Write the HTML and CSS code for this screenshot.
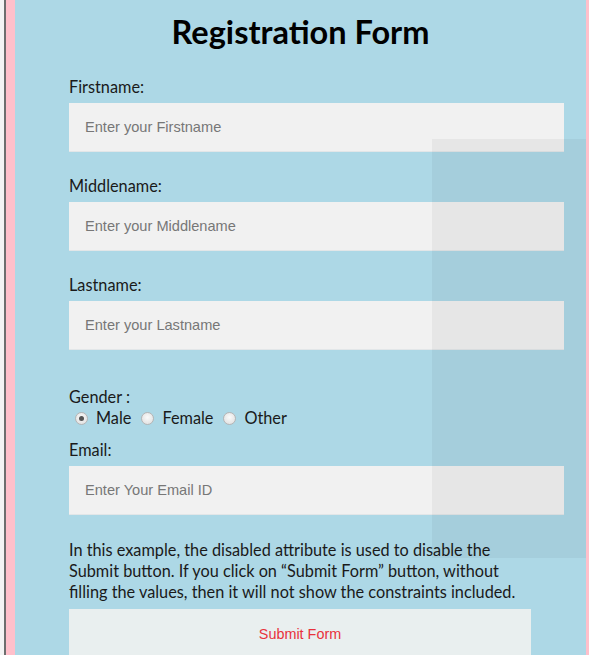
FILE: index.html
```html
<!DOCTYPE html>
<html>
<head>
<meta charset="utf-8">
<link rel="stylesheet" href="styles.css">
</head>
<body>
<div class="frame">
  <div class="edge"></div>
  <div class="page">
    <h1 class="title">Registration Form</h1>
    <form class="form">
      <label class="label">Firstname:</label>
      <input class="field" type="text" placeholder="Enter your Firstname">
      <label class="label">Middlename:</label>
      <input class="field" type="text" placeholder="Enter your Middlename">
      <label class="label">Lastname:</label>
      <input class="field" type="text" placeholder="Enter your Lastname">
      <div class="gender">
        <div class="label-g">Gender :</div>
        <div class="radios">
          <span class="radio checked"></span><span class="opt">Male</span>
          <span class="radio"></span><span class="opt">Female</span>
          <span class="radio"></span><span class="opt">Other</span>
        </div>
      </div>
      <label class="label label-email">Email:</label>
      <input class="field" type="text" placeholder="Enter Your Email ID">
      <p class="note">In this example, the disabled attribute is used to disable the Submit button. If you click on “Submit Form” button, without filling the values, then it will not show the constraints included.</p>
      <button class="submit" type="button">Submit Form</button>
    </form>
  </div>
  <div class="shade"></div>
</div>
</body>
</html>
```
FILE: styles.css
```css
html, body {
  margin: 0;
  padding: 0;
  height: 655px;
  overflow: hidden;
  background: #ffc0cb;
}
.frame {
  position: relative;
  display: flex;
  height: 655px;
}
.edge {
  width: 4px;
  flex: none;
  background: #f4f4f4;
  border-right: 2px solid #6e6e6e;
  margin-right: 9px;
}
.page {
  width: 571px;
  flex: none;
  background: #add8e6;
  padding: 0 22px 0 54px;
  box-sizing: border-box;
  font-family: Lato, "Open Sans", sans-serif;
  color: #1a1a1a;
}
.title {
  margin: 12px 0 0 -54px;
  width: 571px;
  text-align: center;
  font-size: 32.5px;
  font-weight: 700;
  color: #000;
  line-height: 40px;
}
.form {
  display: flex;
  flex-direction: column;
  margin-top: 26px;
}
.label {
  font-size: 16.3px;
  line-height: 18px;
  display: block;
}
.field {
  margin-top: 7px;
  margin-bottom: 25px;
  height: 49px;
  width: 495px;
  box-sizing: border-box;
  border: none;
  border-bottom: 1px solid #e2e6e8;
  background: #f1f1f1;
  padding: 0 16px;
  font-family: "Liberation Sans", Arial, sans-serif;
  font-size: 14.6px;
  color: #333;
  outline: none;
}
.field::placeholder {
  color: #777;
}
.gender {
  margin-top: 13px;
  font-size: 16.3px;
  line-height: 18px;
}
.radios {
  display: flex;
  align-items: center;
  margin-top: 3px;
  padding-left: 6px;
}
.radio {
  width: 11px;
  height: 11px;
  border-radius: 50%;
  border: 1px solid #b5b5b5;
  background: radial-gradient(circle at 50% 40%, #fafafa, #dcdcdc);
  margin-right: 8px;
  position: relative;
  flex: none;
}
.radio.checked::after {
  content: "";
  position: absolute;
  left: 3px;
  top: 3px;
  width: 5px;
  height: 5px;
  border-radius: 50%;
  background: #555;
}
.opt {
  margin-right: 10px;
}
.label-email {
  margin-top: 14px;
}
.note {
  margin: -1px 0 0;
  font-size: 16.3px;
  line-height: 21px;
  width: 470px;
}
.submit {
  margin-top: 7px;
  width: 462px;
  height: 50px;
  border: none;
  background: #e9efef;
  color: #e8323c;
  font-family: "Liberation Sans", Arial, sans-serif;
  font-size: 14.4px;
  padding: 0;
}
.shade {
  position: absolute;
  left: 432px;
  top: 139px;
  width: 154px;
  height: 419px;
  background: rgba(0, 0, 0, 0.042);
  pointer-events: none;
}
```
